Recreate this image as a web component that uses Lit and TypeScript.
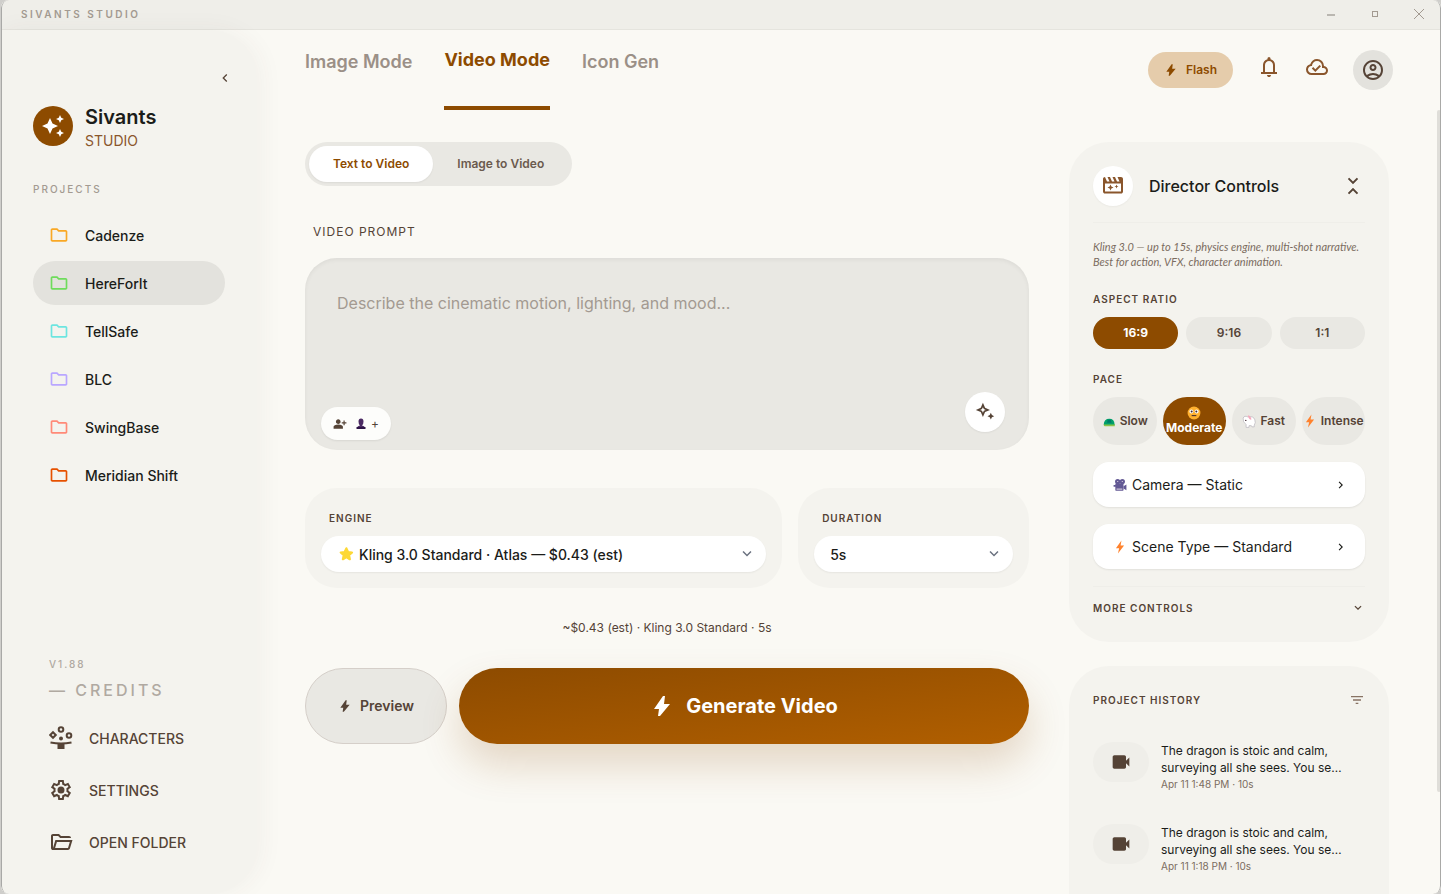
import { LitElement, html, css, svg } from "lit";
import { customElement, state, property } from "lit/decorators.js";
import { classMap } from "lit/directives/class-map.js";
import { styleMap } from "lit/directives/style-map.js";

const PATHS: Record<string, string> = {
  sparkles:
    "M19 9l1.25-2.75L23 5l-2.75-1.25L19 1l-1.25 2.75L15 5l2.75 1.25L19 9zm-7.5.5L9 4 6.5 9.5 1 12l5.5 2.5L9 20l2.5-5.5L17 12l-5.5-2.5zM19 15l-1.25 2.75L15 19l2.75 1.25L19 23l1.25-2.75L23 19l-2.75-1.25L19 15z",
  folder:
    "M4 20q-.825 0-1.4125-.5875T2 18V6q0-.825.5875-1.4125T4 4h6l2 2h8q.825 0 1.4125.5875T22 8v10q0 .825-.5875 1.4125T20 20H4Zm0-2h16V8h-8.825l-2-2H4v12Z",
  folderOpen:
    "M4 20q-.825 0-1.4125-.5875T2 18V6q0-.825.5875-1.4125T4 4h6l2 2h8q.825 0 1.4125.5875T22 8H11.175l-2-2H4v12l2.4-8h17.1l-2.575 8.575q-.2.65-.7375 1.0375T19 20H4Zm2.1-2H19l1.8-6H7.9l-1.8 6Z",
  settings:
    "M9.25 22l-.4-3.2q-.325-.125-.6125-.3T7.675 18.125L4.7 19.375l-2.75-4.75 2.575-1.95Q4.5 12.5 4.5 12.3375v-.675q0-.1625.025-.3375L1.95 9.375l2.75-4.75 2.975 1.25q.275-.2.575-.375t.6-.3l.4-3.2h5.5l.4 3.2q.325.125.6125.3t.5625.375l2.975-1.25 2.75 4.75-2.575 1.95q.025.175.025.3375v.675q0 .1625-.05.3375l2.575 1.95-2.75 4.75-2.95-1.25q-.275.2-.575.375t-.6.3l-.4 3.2h-5.5ZM11 20h1.975l.35-2.65q.775-.2 1.4375-.5875T15.975 15.825l2.475 1.025.975-1.7-2.15-1.625q.125-.35.175-.7375t.05-.7875q0-.4-.05-.7875t-.175-.7375l2.15-1.625-.975-1.7-2.475 1.05q-.55-.575-1.2125-.9625T13.325 6.65L13 4h-1.975l-.35 2.65q-.775.2-1.4375.5875T8.025 8.175L5.55 7.15l-.975 1.7 2.15 1.6q-.125.375-.175.75t-.05.8q0 .4.05.775t.175.75l-2.15 1.625.975 1.7 2.475-1.05q.55.575 1.2125.9625t1.4375.5875L11 20Z M12 8.5a3.5 3.5 0 1 1 0 7a3.5 3.5 0 1 1 0-7Z",
  bolt: "M8 22l1-7H4L13 2h2l-1 8h6L10 22H8z",
  bell: "M4 19v-2h2v-7q0-2.075 1.25-3.6875T10.5 4.2v-.7q0-.625.4375-1.0625T12 2t1.0625.4375T13.5 3.5v.7q2 .5 3.25 2.1125T18 10v7h2v2H4ZM12 22q-.825 0-1.4125-.5875T10 20h4q0 .825-.5875 1.4125T12 22Zm-4-5h8v-7q0-1.65-1.175-2.825T12 6q-1.65 0-2.825 1.175T8 10v7Z",
  cloud:
    "M10.35 17 16 11.35l-1.45-1.4-4.225 4.225-2.1-2.1L6.8 13.5 10.35 17ZM6.5 20q-2.275 0-3.8875-1.575T1 14.575q0-1.95 1.175-3.475T5.25 9.15q.625-2.3 2.5-3.725T12 4q2.925 0 4.9625 2.0375T19 11q1.725.2 2.8625 1.4875T23 15.5q0 1.875-1.3125 3.1875T18.5 20h-12Zm0-2h12q1.05 0 1.775-.725T21 15.5t-.725-1.775T18.5 13H17v-2q0-2.075-1.4625-3.5375T12 6 8.4625 7.4625 7 11h-.5q-1.45 0-2.475 1.025T3 14.5t1.025 2.475T6.5 18Z",
  account:
    "M5.85 17.1q1.275-.975 2.85-1.5375T12 15t3.3.5625T18.15 17.1q.875-1.025 1.3625-2.325T20 12q0-3.325-2.3375-5.6625T12 4 6.3375 6.3375 4 12q0 1.475.4875 2.775T5.85 17.1ZM12 13q-1.475 0-2.4875-1.0125T8.5 9.5t1.0125-2.4875T12 6t2.4875 1.0125T15.5 9.5t-1.0125 2.4875T12 13Zm0 9q-2.075 0-3.9-.7875t-3.175-2.1375T2.7875 15.9 2 12t.7875-3.9 2.1375-3.175T8.1 2.7875 12 2t3.9.7875 3.175 2.1375T21.2125 8.1 22 12t-.7875 3.9-2.1375 3.175T15.9 21.2125 12 22Zm0-2q1.325 0 2.5-.3875T16.65 18.5q-.975-.725-2.15-1.1125T12 17t-2.5.3875T7.35 18.5q.975.725 2.15 1.1125T12 20Zm0-9q.65 0 1.075-.425T13.5 9.5t-.425-1.075T12 8t-1.075.425T10.5 9.5t.425 1.075T12 11Z",
  video:
    "M4 20q-.825 0-1.4125-.5875T2 18V6q0-.825.5875-1.4125T4 4h12q.825 0 1.4125.5875T18 6v4.5l4-4v11l-4-4V18q0 .825-.5875 1.4125T16 20H4Z",
  filter: "M10 18v-2h4v2h-4Zm-4-5v-2h12v2H6ZM3 8V6h18v2H3Z",
  collapse:
    "M8.2 20.3 6.8 18.9 12 13.7 17.2 18.9 15.8 20.3 12 16.5ZM12 10.3 6.8 5.1 8.2 3.7 12 7.5 15.8 3.7 17.2 5.1Z",
  left: "M14 18l-6-6 6-6 1.4 1.4-4.6 4.6 4.6 4.6Z",
  right: "M9.4 18 8 16.6l4.6-4.6L8 7.4 9.4 6l6 6Z",
  down: "M12 15.4l-6-6L7.4 8l4.6 4.6L16.6 8 18 9.4Z",
  personAdd:
    "M18 14v-3h-3V9h3V6h2v3h3v2h-3v3h-2Zm-9-2q-1.65 0-2.825-1.175T5 8t1.175-2.825T9 4t2.825 1.175T13 8t-1.175 2.825T9 12Zm-8 8v-2.8q0-.85.4375-1.5625T2.6 14.55q1.55-.775 3.15-1.1625T9 13t3.25.3875 3.15 1.1625q.725.375 1.1625 1.0875T17 17.2V20H1Z",
};

const DRAWINGS: Record<string, unknown> = {
  clapper: svg`<path fill="currentColor" fill-rule="evenodd" d="M4 3l2 4.500h2.500L6.500 3H9l2 4.500h2.500L11.500 3H14l2 4.500h2.500L16.500 3H20q.825 0 1.413.587T22 5v12.500q0 .825-.587 1.413T20 19.500H4q-.825 0-1.413-.587T2 17.500V5q0-.825.587-1.413T4 3ZM4 9.500v8h16v-8Z"/><path fill="currentColor" d="M9.500 10.500l.9 2.100 2.100.9-2.100.9-.9 2.100-.9-2.100-2.100-.9 2.100-.9ZM15.500 10.500l.6 1.400 1.400.6-1.400.6-.6 1.400-.6-1.400-1.400-.6 1.400-.6Z"/>`,
  magic: svg`<path fill="currentColor" fill-rule="evenodd" d="M9.500 1l2.600 5.900L18 9.500l-5.900 2.600L9.500 18l-2.600-5.900L1 9.500l5.900-2.600ZM9.500 6.200L8.400 8.400 6.200 9.500l2.200 1.100L9.500 12.800l1.100-2.200 2.200-1.100-2.200-1.100ZM19 13l1.300 2.700L23 17l-2.700 1.300L19 21l-1.300-2.700L15 17l2.700-1.300Z"/>`,
  characters: svg`<g fill="none" stroke="currentColor" stroke-width="2"><circle cx="12" cy="3.500" r="2.300"/><circle cx="20" cy="9.500" r="2.300"/><path d="M4 6.200l2.800 2.800L4 11.800 1.200 9Z"/><path d="M1.500 16.500q10.500 2 21 0"/></g><circle cx="12" cy="12.500" r="2" fill="currentColor"/><path fill="currentColor" d="M8.500 17h7v6h-7Z"/>`,
  star: svg`<path fill="#fdd835" stroke="#fdd835" stroke-width="3" stroke-linejoin="round" d="M12.500 4.500l2.200 4.900 5.300.6-4 3.600 1.100 5.300-4.600-2.700-4.600 2.700 1.100-5.300-4-3.600 5.300-.6Z"/>`,
  zap: svg`<path fill="#ff822d" d="M14.500 1L5 14h5.500L8.500 23 19 9.500h-6Z"/>`,
  turtle: svg`<path fill="#8bc34a" d="M3 17h19v3q0 1-1 1H5q-2 0-2-2Z"/><path fill="#00a06a" d="M3 18q.5-10 9.500-10t9 10Z"/><path fill="#00796b" d="M10 10h5l1.500 5h-8Z"/>`,
  face: svg`<circle cx="12" cy="12" r="11" fill="#ffb02e"/><circle cx="7.500" cy="9.500" r="3.400" fill="#fff"/><circle cx="16.500" cy="9.500" r="3.400" fill="#fff"/><circle cx="8" cy="9.500" r="1.700" fill="#402a32"/><circle cx="16" cy="9.500" r="1.700" fill="#402a32"/><path d="M8 16.500h8" stroke="#402a32" stroke-width="1.800"/>`,
  rabbit: svg`<path fill="#fff" stroke="#b9b4bc" stroke-width="1.200" d="M2 7q2-5 8-2 10-2 12 5 2 5-1 9v3h-4l-1-2h-4v3H7v-5q-6-4-5-11Z"/><path fill="#f6a8bc" d="M10 2q6 1 6 8-5-1-6-8Z"/><circle cx="6.500" cy="11" r="1.200" fill="#402a32"/>`,
  camera: svg`<g fill="#635994"><circle cx="8" cy="6" r="4.500"/><circle cx="16" cy="6" r="4.500"/><rect x="4" y="9" width="14" height="13" rx="2"/><path d="M1 12h4v3H1ZM18 14l5-3v10l-5-3Z"/></g><path fill="#cdc4d6" d="M6 18h10v2H6ZM7 5h2v2H7ZM15 5h2v2h-2Z"/>`,
  bust: svg`<path fill="#4b2a63" d="M12 1q5 0 5 6t-3 8q5 1 6 4H4q1-3 6-4-3-2-3-8t5-6Z"/><path fill="#2e1446" d="M3 18h18v4H3Z"/>`,
};

@customElement("ui-icon")
export class UiIcon extends LitElement {
  @property() name = "";
  static styles = css`
    :host {
      display: inline-flex;
      flex: none;
      width: 24px;
      height: 24px;
    }
    .glyph {
      width: 100%;
      height: 100%;
      display: block;
    }
  `;
  render() {
    return html`<svg class="glyph" viewBox="0 0 24 24" aria-hidden="true">
      ${DRAWINGS[this.name] ?? svg`<path fill="currentColor" fill-rule="evenodd" d=${PATHS[this.name]}></path>`}
    </svg>`;
  }
}

interface Project {
  name: string;
  color: string;
}

const PROJECTS: Project[] = [
  { name: "Cadenze", color: "#f9a825" },
  { name: "HereForIt", color: "#6fdc5c" },
  { name: "TellSafe", color: "#6ce5e0" },
  { name: "BLC", color: "#b9a7ff" },
  { name: "SwingBase", color: "#ff8a78" },
  { name: "Meridian Shift", color: "#e65100" },
];

const LINKS = [
  { icon: "characters", label: "CHARACTERS" },
  { icon: "settings", label: "SETTINGS" },
  { icon: "folderOpen", label: "OPEN FOLDER" },
];

const PACES = [
  { icon: "turtle", label: "Slow" },
  { icon: "face", label: "Moderate" },
  { icon: "rabbit", label: "Fast" },
  { icon: "zap", label: "Intense" },
];

const HISTORY = [
  { text: "The dragon is stoic and calm, surveying all she sees. You se…", meta: "Apr 11 1:48 PM · 10s" },
  { text: "The dragon is stoic and calm, surveying all she sees. You se…", meta: "Apr 11 1:18 PM · 10s" },
];

@customElement("app-root")
export class AppRoot extends LitElement {
  @state() private project = "HereForIt";
  @state() private mode = "Video Mode";
  @state() private source = "Text to Video";
  @state() private ratio = "16:9";
  @state() private pace = "Moderate";

  static styles = css`
    :host {
      display: block;
      height: 100vh;
      overflow: hidden;
      background: #cfcecb;
      padding-left: 1px;
      box-sizing: border-box;
      color: #1b1c19;
      font-family: Inter, "Liberation Sans", sans-serif;
      font-size: 14px;
      line-height: 20px;
    }
    *,
    *::before,
    *::after {
      box-sizing: border-box;
    }
    button,
    select,
    textarea {
      font: inherit;
      color: inherit;
      border: 0;
      margin: 0;
      padding: 0;
      background: none;
    }
    button {
      cursor: pointer;
    }
    h1,
    h2,
    p,
    ul {
      margin: 0;
      padding: 0;
      list-style: none;
      font-weight: inherit;
    }
    .window {
      position: relative;
      height: 100%;
      display: flex;
      flex-direction: column;
      border-radius: 8px;
      overflow: hidden;
      background: #faf9f4;
    }
    .window::after {
      content: "";
      position: absolute;
      inset: 0;
      border: 1px solid #a9a9a7;
      border-top: 0;
      border-bottom: 0;
      border-radius: 8px;
      pointer-events: none;
    }
    .titlebar {
      flex: none;
      height: 30px;
      display: flex;
      align-items: center;
      justify-content: space-between;
      padding-left: 20px;
      padding-bottom: 2px;
      background: #efeee9;
      border-bottom: 1px solid #e5e4de;
      color: #a39a91;
    }
    .brandline {
      font-size: 10px;
      font-weight: 600;
      letter-spacing: 0.25em;
    }
    .controls {
      display: flex;
    }
    .control {
      width: 44px;
      height: 28px;
      display: grid;
      place-items: center;
    }
    .body {
      flex: 1;
      min-height: 0;
      display: flex;
    }
    .sidebar {
      position: relative;
      flex: none;
      width: 256px;
      padding: 36px 32px 32px;
      display: flex;
      flex-direction: column;
      background: #f4f3ee;
      border-radius: 0 48px 48px 0;
      box-shadow: 4px 0 24px rgba(85, 67, 54, 0.05);
    }
    .fold {
      align-self: flex-end;
      width: 24px;
      height: 24px;
      margin-right: -12px;
      display: grid;
      place-items: center;
      color: #554336;
    }
    .icon-12 {
      width: 12px;
      height: 12px;
    }
    .icon-14 {
      width: 14px;
      height: 14px;
    }
    .icon-16 {
      width: 16px;
      height: 16px;
    }
    .icon-18 {
      width: 18px;
      height: 18px;
    }
    .icon-20 {
      width: 20px;
      height: 20px;
    }
    .brand {
      display: flex;
      gap: 12px;
      align-items: center;
      height: 48px;
      margin-top: 12px;
    }
    .logo {
      width: 40px;
      height: 40px;
      border-radius: 50%;
      background: #8d4b00;
      color: #fff;
      display: grid;
      place-items: center;
    }
    .brand-text {
      padding-top: 2px;
    }
    .brand-name {
      font-size: 20px;
      line-height: 28px;
      font-weight: 600;
    }
    .brand-sub {
      color: #8a562c;
    }
    .section {
      margin-top: 31px;
      font-size: 10px;
      line-height: 16px;
      font-weight: 500;
      letter-spacing: 2px;
      color: #a39a91;
    }
    .projects {
      margin-top: 16px;
      display: grid;
      gap: 4px;
    }
    .project {
      width: 100%;
      height: 44px;
      padding: 0 16px;
      border-radius: 22px;
      display: flex;
      align-items: center;
      gap: 16px;
      font-weight: 500;
      text-align: left;
    }
    .label {
      padding-top: 2px;
    }
    .project.on {
      background: #e3e2dd;
    }
    .foot {
      margin-top: auto;
      padding-left: 16px;
      color: #b0a9a1;
    }
    .version {
      font-size: 10px;
      letter-spacing: 2px;
      font-weight: 500;
    }
    .credits {
      font-size: 16px;
      line-height: 32px;
      font-weight: 500;
      letter-spacing: 3px;
    }
    .links {
      margin-top: 12px;
      display: grid;
      gap: 12px;
    }
    .link {
      height: 40px;
      display: flex;
      align-items: center;
      gap: 16px;
      color: #554336;
      font-weight: 500;
      text-decoration: none;
    }
    .main {
      flex: 1;
      min-width: 0;
      display: flex;
      flex-direction: column;
    }
    .topbar {
      flex: none;
      height: 80px;
      padding: 0 48px;
      display: flex;
      align-items: center;
      justify-content: space-between;
    }
    .tabs {
      height: 100%;
      display: flex;
      gap: 32px;
    }
    .tab {
      height: 100%;
      padding-bottom: 16px;
      font-size: 18px;
      font-weight: 600;
      color: #9b9087;
    }
    .tab.on {
      color: #8d4b00;
      font-weight: 700;
      border-bottom: 4px solid #8d4b00;
    }
    .actions {
      display: flex;
      align-items: center;
      gap: 24px;
      color: #8a562c;
    }
    .flash {
      height: 36px;
      padding: 0 16px;
      border-radius: 18px;
      display: flex;
      align-items: center;
      gap: 8px;
      background: #e5ccab;
      color: #8d4b00;
      font-size: 12px;
      font-weight: 600;
    }
    .plain {
      display: grid;
      padding-bottom: 6px;
    }
    .avatar {
      width: 40px;
      height: 40px;
      border-radius: 50%;
      background: #e3e2dd;
      color: #554336;
      display: grid;
      place-items: center;
    }
    .scroll {
      flex: 1;
      min-height: 0;
      display: flex;
      justify-content: space-between;
      overflow: hidden;
    }
    .thumb {
      flex: none;
      width: 4px;
      height: 87%;
      border-radius: 2px;
      background: #dfded9;
    }
    .columns {
      flex: 1;
      min-width: 0;
      padding: 32px 48px;
      display: grid;
      grid-template-columns: minmax(0, 1fr) 320px;
      gap: 40px;
      align-items: start;
    }
    .segment {
      display: inline-flex;
      padding: 4px;
      border-radius: 22px;
      background: #e9e8e3;
    }
    .seg {
      height: 36px;
      padding: 0 24px;
      border-radius: 18px;
      font-size: 12px;
      font-weight: 600;
      color: #6b5a4e;
    }
    .seg.on {
      background: #fff;
      color: #8d4b00;
      box-shadow: 0 1px 2px rgba(0, 0, 0, 0.06);
    }
    .prompt-label {
      display: block;
      margin: 36px 8px 16px;
      font-size: 12px;
      letter-spacing: 1px;
      color: #554336;
    }
    .prompt {
      position: relative;
      display: grid;
    }
    .prompt-text {
      width: 100%;
      height: 192px;
      padding: 32px;
      border-radius: 32px;
      background: #e9e8e3;
      box-shadow: inset 0 2px 4px rgba(0, 0, 0, 0.05);
      font-size: 16px;
      line-height: 26px;
      resize: none;
    }
    .prompt-text::placeholder {
      color: #a39a91;
      opacity: 1;
    }
    .cast {
      position: absolute;
      left: 16px;
      bottom: 10px;
      height: 33px;
      padding: 0 12px;
      display: flex;
      align-items: center;
      gap: 8px;
      border-radius: 17px;
      background: #fdfdfb;
      box-shadow: 0 1px 2px rgba(0, 0, 0, 0.08);
      color: #554336;
      font-size: 12px;
    }
    .cast-add {
      display: flex;
      align-items: center;
      gap: 4px;
    }
    .enhance {
      position: absolute;
      right: 24px;
      bottom: 18px;
      width: 40px;
      height: 40px;
      border-radius: 50%;
      display: grid;
      place-items: center;
      background: #fff;
      box-shadow: 0 1px 2px rgba(0, 0, 0, 0.06);
      color: #554336;
    }
    .settings {
      margin-top: 38px;
      display: grid;
      grid-template-columns: 31fr 15fr;
      gap: 16px;
    }
    .setting {
      padding: 20px 16px 16px;
      border-radius: 32px;
      background: #f4f3ee;
    }
    .caption {
      display: block;
      font-size: 10px;
      line-height: 20px;
      font-weight: 600;
      letter-spacing: 1px;
      color: #554336;
    }
    .setting .caption {
      margin: 0 8px 8px;
    }
    .pick {
      display: flex;
      align-items: center;
      gap: 4px;
      height: 36px;
      padding: 0 10px 0 16px;
      border-radius: 18px;
      background: #fff;
      box-shadow: 0 1px 2px rgba(0, 0, 0, 0.06);
      color: #6b7280;
    }
    .select {
      flex: 1;
      min-width: 0;
      height: 36px;
      padding-top: 2px;
      appearance: none;
      color: #1b1c19;
      font-weight: 500;
      outline: none;
    }
    .estimate {
      margin-top: 30px;
      text-align: center;
      font-size: 12px;
      color: #554336;
    }
    .run {
      margin-top: 30px;
      display: flex;
      gap: 12px;
    }
    .preview {
      height: 76px;
      padding: 0 32px;
      border-radius: 38px;
      border: 1px solid #d5cfc9;
      background: #e9e8e3;
      color: #554336;
      font-weight: 600;
      display: flex;
      align-items: center;
      gap: 8px;
    }
    .generate {
      flex: 1;
      height: 76px;
      border-radius: 38px;
      display: flex;
      align-items: center;
      justify-content: center;
      gap: 12px;
      color: #fff;
      font-size: 20px;
      font-weight: 700;
      background: linear-gradient(to bottom right, #8d4b00, #b15f00);
      box-shadow: 0 20px 40px rgba(141, 75, 0, 0.2);
    }
    .aside {
      display: grid;
      gap: 24px;
    }
    .panel {
      padding: 24px;
      border-radius: 40px;
      background: #f4f3ee;
    }
    .panel-head {
      display: flex;
      align-items: center;
      gap: 16px;
      padding-bottom: 16px;
      border-bottom: 1px solid #efeee9;
    }
    .badge {
      width: 40px;
      height: 40px;
      border-radius: 50%;
      background: #fff;
      color: #8a562c;
      display: grid;
      place-items: center;
      box-shadow: 0 1px 2px rgba(0, 0, 0, 0.04);
    }
    .panel-title {
      flex: 1;
      font-size: 16px;
      line-height: 24px;
      font-weight: 500;
    }
    .fold-panel {
      display: grid;
      color: #554336;
    }
    .note {
      margin: 16px 0 20px;
      font-family: Lato, Inter, sans-serif;
      font-size: 11px;
      line-height: 15px;
      font-style: italic;
      color: #7b6c60;
    }
    .ratios {
      margin: 8px 0 20px;
      display: grid;
      grid-template-columns: repeat(3, 1fr);
      gap: 8px;
    }
    .chip {
      height: 32px;
      border-radius: 24px;
      background: #e9e8e3;
      color: #554336;
      font-size: 12px;
      font-weight: 600;
    }
    .chip.on {
      background: #8d4b00;
      color: #fff;
      font-weight: 700;
    }
    .paces {
      margin: 8px 0 17px;
      display: grid;
      grid-template-columns: repeat(4, minmax(0, 1fr));
      gap: 6px;
    }
    .pace {
      height: 48px;
      line-height: 16px;
      display: flex;
      align-items: center;
      justify-content: center;
      gap: 4px;
    }
    .pace.on {
      flex-direction: column;
      gap: 0;
    }
    .row {
      width: 100%;
      height: 45px;
      margin-bottom: 17px;
      padding: 0 17px 0 20px;
      display: flex;
      align-items: center;
      gap: 5px;
      border-radius: 16px;
      background: #fff;
      box-shadow: 0 1px 2px rgba(0, 0, 0, 0.08);
      text-align: left;
    }
    .grow {
      flex: 1;
    }
    .more {
      width: 100%;
      padding: 11px 0 0;
      display: flex;
      align-items: center;
      justify-content: space-between;
      border-top: 1px solid #efeee9;
      color: #554336;
    }
    .past {
      padding-bottom: 72px;
    }
    .history-head {
      display: flex;
      align-items: center;
      justify-content: space-between;
    }
    .history {
      margin-top: 32px;
      display: grid;
      gap: 24px;
    }
    .entry {
      display: flex;
      gap: 12px;
      min-height: 58px;
      align-items: flex-start;
    }
    .shot {
      flex: none;
      width: 56px;
      height: 40px;
      border-radius: 20px;
      background: #efeee9;
      color: #554336;
      display: grid;
      place-items: center;
    }
    .entry-text {
      font-size: 12px;
      line-height: 17px;
    }
    .entry-meta {
      font-size: 10px;
      line-height: 17px;
      color: #7b6c60;
    }
    .muted {
      display: grid;
      color: #887364;
    }
  `;

  private renderSidebar() {
    return html`<aside class="sidebar">
      <button class="fold" aria-label="Collapse sidebar"><ui-icon class="icon-16" name="left"></ui-icon></button>
      <div class="brand">
        <div class="logo"><ui-icon name="sparkles"></ui-icon></div>
        <div class="brand-text">
          <h1 class="brand-name">Sivants</h1>
          <p class="brand-sub">STUDIO</p>
        </div>
      </div>
      <h2 class="section">PROJECTS</h2>
      <div class="projects">
        ${PROJECTS.map(
          (p) => html`<button
            class=${classMap({ project: true, on: p.name === this.project })}
            @click=${() => (this.project = p.name)}
          >
            <ui-icon class="icon-20" name="folder" style=${styleMap({ color: p.color })}></ui-icon
            ><span class="label">${p.name}</span>
          </button>`
        )}
      </div>
      <div class="foot">
        <p class="version">V1.88</p>
        <p class="credits">— CREDITS</p>
        <nav class="links">
          ${LINKS.map(
            (l) => html`<a class="link" href="#"
              ><ui-icon name=${l.icon}></ui-icon><span class="label">${l.label}</span></a
            >`
          )}
        </nav>
      </div>
    </aside>`;
  }

  private renderTopbar() {
    return html`<header class="topbar">
      <nav class="tabs">
        ${["Image Mode", "Video Mode", "Icon Gen"].map(
          (t) => html`<button class=${classMap({ tab: true, on: t === this.mode })} @click=${() => (this.mode = t)}>
            ${t}
          </button>`
        )}
      </nav>
      <div class="actions">
        <button class="flash"><ui-icon class="icon-14" name="bolt"></ui-icon>Flash</button>
        <button class="plain" aria-label="Notifications"><ui-icon name="bell"></ui-icon></button>
        <button class="plain" aria-label="Sync status"><ui-icon name="cloud"></ui-icon></button>
        <button class="avatar" aria-label="Account"><ui-icon name="account"></ui-icon></button>
      </div>
    </header>`;
  }

  private renderWorkspace() {
    return html`<section>
      <div class="segment">
        ${["Text to Video", "Image to Video"].map(
          (s) => html`<button class=${classMap({ seg: true, on: s === this.source })} @click=${() => (this.source = s)}>
            ${s}
          </button>`
        )}
      </div>
      <label class="prompt-label" for="prompt">VIDEO PROMPT</label>
      <div class="prompt">
        <textarea
          class="prompt-text"
          id="prompt"
          placeholder="Describe the cinematic motion, lighting, and mood..."
        ></textarea>
        <button class="cast" aria-label="Add character">
          <ui-icon class="icon-14" name="personAdd"></ui-icon
          ><span class="cast-add"><ui-icon class="icon-12" name="bust"></ui-icon>+</span>
        </button>
        <button class="enhance" aria-label="Enhance prompt"><ui-icon class="icon-20" name="magic"></ui-icon></button>
      </div>
      <div class="settings">
        <div class="setting">
          <label class="caption" for="engine">ENGINE</label>
          <div class="pick">
            <ui-icon class="icon-18" name="star"></ui-icon>
            <select class="select" id="engine">
              <option>Kling 3.0 Standard · Atlas — $0.43 (est)</option>
            </select>
            <ui-icon class="icon-18" name="down"></ui-icon>
          </div>
        </div>
        <div class="setting">
          <label class="caption" for="duration">DURATION</label>
          <div class="pick">
            <select class="select" id="duration">
              <option>5s</option>
              <option>10s</option>
            </select>
            <ui-icon class="icon-18" name="down"></ui-icon>
          </div>
        </div>
      </div>
      <p class="estimate">~$0.43 (est) · Kling 3.0 Standard · 5s</p>
      <div class="run">
        <button class="preview"><ui-icon class="icon-14" name="bolt"></ui-icon>Preview</button>
        <button class="generate"><ui-icon name="bolt"></ui-icon>Generate Video</button>
      </div>
    </section>`;
  }

  private renderDirector() {
    return html`<section class="panel">
      <div class="panel-head">
        <div class="badge"><ui-icon name="clapper"></ui-icon></div>
        <h2 class="panel-title">Director Controls</h2>
        <button class="fold-panel" aria-label="Collapse controls"><ui-icon name="collapse"></ui-icon></button>
      </div>
      <p class="note">
        Kling 3.0 — up to 15s, physics engine, multi-shot narrative. Best for action, VFX, character animation.
      </p>
      <h2 class="caption">ASPECT RATIO</h2>
      <div class="ratios">
        ${["16:9", "9:16", "1:1"].map(
          (r) => html`<button class=${classMap({ chip: true, on: r === this.ratio })} @click=${() => (this.ratio = r)}>
            ${r}
          </button>`
        )}
      </div>
      <h2 class="caption">PACE</h2>
      <div class="paces">
        ${PACES.map(
          (p) => html`<button
            class=${classMap({ chip: true, pace: true, on: p.label === this.pace })}
            @click=${() => (this.pace = p.label)}
          >
            <ui-icon class="icon-14" name=${p.icon}></ui-icon>${p.label}
          </button>`
        )}
      </div>
      <button class="row">
        <ui-icon class="icon-14" name="camera"></ui-icon><span class="grow">Camera — Static</span
        ><ui-icon class="icon-14" name="right"></ui-icon>
      </button>
      <button class="row">
        <ui-icon class="icon-14" name="zap"></ui-icon><span class="grow">Scene Type — Standard</span
        ><ui-icon class="icon-14" name="right"></ui-icon>
      </button>
      <button class="more"><span class="caption">MORE CONTROLS</span><ui-icon class="icon-14" name="down"></ui-icon></button>
    </section>`;
  }

  private renderHistory() {
    return html`<section class="panel past">
      <div class="history-head">
        <h2 class="caption">PROJECT HISTORY</h2>
        <button class="muted" aria-label="Filter history"><ui-icon class="icon-16" name="filter"></ui-icon></button>
      </div>
      <ul class="history">
        ${HISTORY.map(
          (h) => html`<li class="entry">
            <div class="shot"><ui-icon class="icon-20" name="video"></ui-icon></div>
            <div>
              <p class="entry-text">${h.text}</p>
              <p class="entry-meta">${h.meta}</p>
            </div>
          </li>`
        )}
      </ul>
    </section>`;
  }

  render() {
    return html`<div class="window">
      <div class="titlebar">
        <span class="brandline">SIVANTS STUDIO</span>
        <div class="controls">
          <button class="control" aria-label="Minimize">
            <svg width="12" height="12" viewBox="0 0 12 12"><path d="M2 7h8" stroke="#a8a49e" stroke-width="1.500" /></svg>
          </button>
          <button class="control" aria-label="Maximize">
            <svg width="12" height="12" viewBox="0 0 12 12">
              <rect x="3.500" y="3.500" width="5" height="5" fill="none" stroke="#a39a91" />
            </svg>
          </button>
          <button class="control" aria-label="Close">
            <svg width="12" height="12" viewBox="0 0 12 12"><path d="M1 1l10 10M11 1L1 11" stroke="#a39a91" /></svg>
          </button>
        </div>
      </div>
      <div class="body">
        ${this.renderSidebar()}
        <main class="main">
          ${this.renderTopbar()}
          <div class="scroll">
            <div class="columns">
              ${this.renderWorkspace()}
              <div class="aside">${this.renderDirector()} ${this.renderHistory()}</div>
            </div>
            <div class="thumb"></div>
          </div>
        </main>
      </div>
    </div>`;
  }
}
